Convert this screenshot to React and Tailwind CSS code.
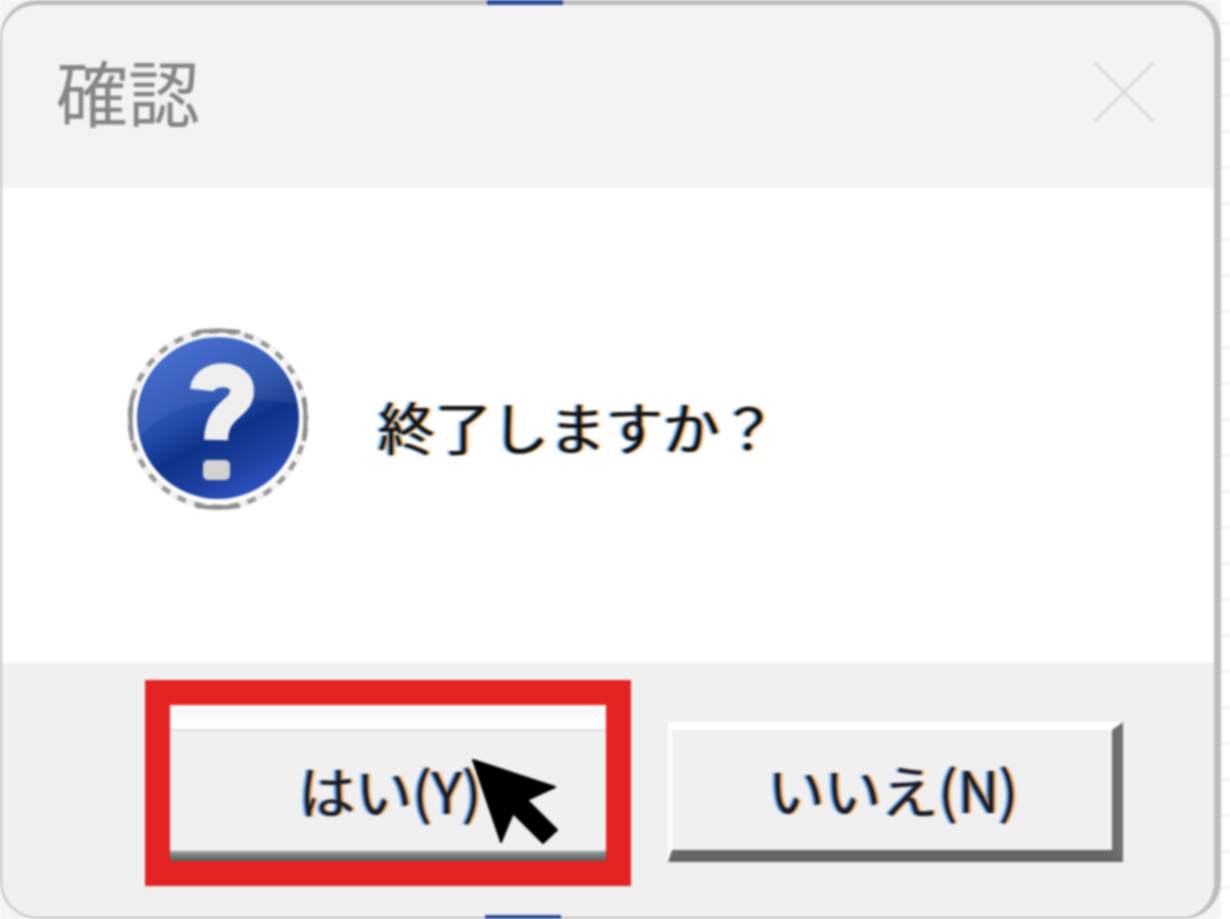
const jp = "font-['Noto_Sans_CJK_JP','Noto_Sans_CJK_SC',sans-serif]";
const fringe = "[text-shadow:2.5px_0_1px_rgba(235,140,30,0.7),-2.5px_0_1px_rgba(30,130,235,0.7)]";

const QuestionIcon = () => (
    <svg width="184" height="184" viewBox="0 0 184 184" className="shrink-0">
        <defs>
            <linearGradient id="disc" x1="0.25" y1="0" x2="0.75" y2="1">
                <stop offset="0" stopColor="#3d66cf" />
                <stop offset="0.42" stopColor="#244cab" />
                <stop offset="0.6" stopColor="#0f3389" />
                <stop offset="0.78" stopColor="#1d3f9f" />
                <stop offset="1" stopColor="#3355c8" />
            </linearGradient>
        </defs>
        <circle cx="92" cy="93" r="88" fill="none" stroke="#9a9a9a" strokeWidth="5" />
        <circle cx="92" cy="93" r="88" fill="none" stroke="#f4f4f4" strokeWidth="5" strokeDasharray="9 9" />
        <path d="M70 6 Q92 3 114 6 M70 180 Q92 183 114 180 M6 71 Q3 93 6 115 M178 71 Q181 93 178 115" fill="none" stroke="#8c8c8c" strokeWidth="4" />
        <circle cx="92" cy="92" r="81" fill="url(#disc)" />
        <path d="M14 112 C40 78 90 66 172 78 C172 60 150 14 92 11 C40 11 6 60 14 112 Z" fill="#ffffff" opacity="0.07" />
        <path d="M76 64 C78 44 118 44 116 66 C115 84 91 82 90 114" fill="none" stroke="#efefef" strokeWidth="24" />
        <rect x="77" y="134" width="27" height="20" rx="5" fill="#d2d2d2" />
    </svg>
);

const Cursor = () => (
    <svg width="90" height="90" viewBox="0 0 90 90" className="absolute left-[302px] top-[53px]">
        <path d="M1 2 L83 29 L55 42 L85 72 L71 85 L41 55 L29 84 Z" fill="#000000" stroke="#000000" strokeWidth="2" strokeLinejoin="round" />
    </svg>
);

const App = () => {
    return (
        <div className="relative flex w-[1230px] h-[919px] overflow-hidden bg-[#f4f4f4] blur-[1px]">
            {/* dialog */}
            <div className="flex flex-col w-[1221px] h-[919px] bg-white border-t-[5px] border-r-[7px] border-b-[2px] border-l-[2px] border-[#bdbdbd] rounded-[38px] overflow-hidden">
                {/* title bar */}
                <div className="flex items-start justify-between h-[183px] bg-[#f3f3f3] pl-[54px] pr-[58px]">
                    <span className={`${jp} mt-[41px] text-[72px] leading-[88px] text-[#858585]`}>確認</span>
                    <svg width="64" height="64" viewBox="0 0 64 64" className="mt-[55px]">
                        <path d="M2 2 L62 62 M62 2 L2 62" stroke="#dcdcdc" strokeWidth="3" />
                    </svg>
                </div>

                {/* message */}
                <div className="flex items-start h-[475px] pl-[124px] pt-[138px] bg-white">
                    <QuestionIcon />
                    <span className={`${jp} ${fringe} ml-[68px] mt-[57px] text-[57px] leading-[84px] text-[#111111]`}>終了しますか？</span>
                </div>

                {/* buttons */}
                <div className={`${jp} flex items-start flex-1 bg-[#f0f0f0] pl-[143px] pt-[17px] text-[57px] text-[#1a1a2a]`}>
                    <div className="relative w-[486px] h-[206px] border-[25px] border-[#e42323]">
                        <button className="flex flex-col w-full h-full">
                            <span className="h-[26px] bg-gradient-to-b from-[#f5f8f8] to-white border-b-2 border-[#dfdfdf]" />
                            <span className={`${fringe} flex flex-1 items-center justify-center bg-[#f0f0f0] pb-[2px] pl-[4px]`}>はい(Y)</span>
                            <span className="h-[10px] bg-gradient-to-b from-[#9aa0a0] to-[#555c5c]" />
                        </button>
                        <Cursor />
                    </div>
                    <button className="flex items-center justify-center w-[455px] h-[140px] mt-[42px] ml-[37px] pb-[2px] pl-[2px] bg-[#f0f0f0] border-t-[8px] border-l-[4px] border-r-[11px] border-b-[12px] border-t-white border-l-white border-r-[#6f6f6f] border-b-[#666666]">
                        <span className={fringe}>いいえ(N)</span>
                    </button>
                </div>
            </div>

            {/* grid lines of the sheet behind */}
            <div className="flex flex-col w-[9px] pt-[23px] bg-white">
                {[...Array(25)].map((_, i) => (
                    <div key={i} className="h-[36px] shrink-0 border-t border-[#dddddd]" />
                ))}
            </div>

            {/* window behind peeking out */}
            <div className="absolute left-[487px] top-0 w-[76px] h-[5px] bg-[#2b4a9a]" />
            <div className="absolute left-[485px] bottom-0 w-[76px] h-[4px] bg-[#2b4a9a]" />
        </div>
    );
};

export default App;
